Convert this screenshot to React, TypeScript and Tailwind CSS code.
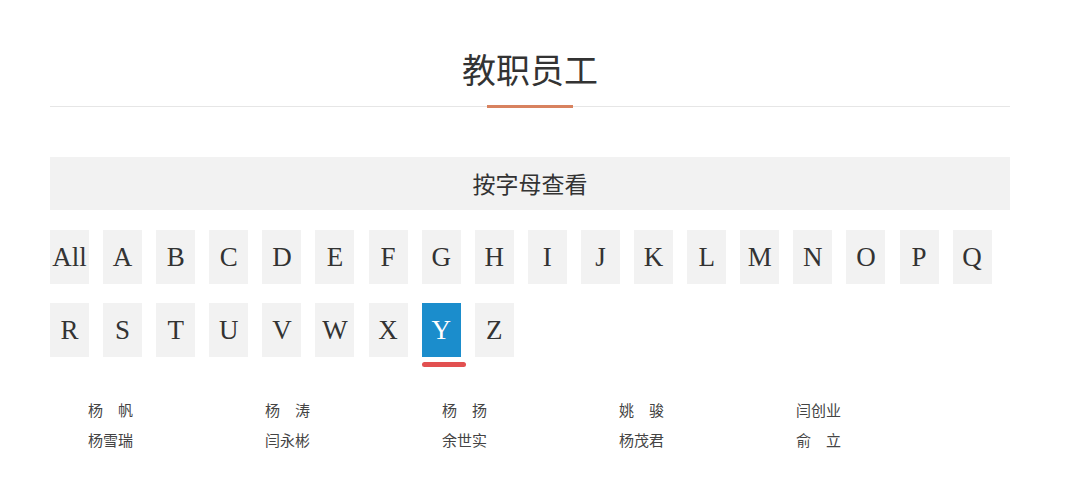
import React from "react";

const ROW_ONE = ["All", "A", "B", "C", "D", "E", "F", "G", "H", "I", "J", "K", "L", "M", "N", "O", "P", "Q"];
const ROW_TWO = ["R", "S", "T", "U", "V", "W", "X", "Y", "Z"];
const LETTERS = [...ROW_ONE, ...ROW_TWO];

const NAMES = ["杨　帆", "杨　涛", "杨　扬", "姚　骏", "闫创业", "杨雪瑞", "闫永彬", "余世实", "杨茂君", "俞　立"];

const cjk = "font-['Noto_Sans_CJK_SC','Noto_Sans',sans-serif]";

export default function App() {
  const active = "Y";

  return (
    <div className="min-h-[488px] w-[1080px] bg-white">
      <div className="ml-[50px] w-[960px]">
        <div className="relative border-b border-[#e6e6e6] pt-[47px] pb-[15px] text-center">
          <h1 className={`${cjk} text-[34px] leading-[44px] font-normal text-[#333]`}>教职员工</h1>
          <div className="absolute bottom-[-2px] left-1/2 h-[3px] w-[86px] -translate-x-1/2 bg-[#d8825f]" />
        </div>

        <div className={`${cjk} mt-[50px] flex h-[53px] items-center justify-center bg-[#f2f2f2] text-[23px] text-[#333]`}>
          按字母查看
        </div>

        <div className="mt-[20px] flex flex-wrap gap-x-[14.1px] gap-y-[19px]">
          {LETTERS.map(letter => (
            <div key={letter} className="relative">
              <div
                className={`flex h-[54px] w-[39px] items-center justify-center font-['Liberation_Serif',serif] text-[27px] ${
                  letter === active ? "bg-[#1b8dcc] text-white" : "bg-[#f2f2f2] text-[#333]"
                }`}
              >
                {letter}
              </div>
              {letter === active && (
                <div className="absolute left-0 top-[59px] h-[5px] w-[44px] rounded-full bg-[#e25050]" />
              )}
            </div>
          ))}
        </div>

        <div className={`${cjk} mt-[38px] grid grid-cols-[repeat(5,177px)] pl-[38px] text-[15px] leading-[30px] text-[#444]`}>
          {NAMES.map(name => (
            <div key={name}>{name}</div>
          ))}
        </div>
      </div>
    </div>
  );
}
